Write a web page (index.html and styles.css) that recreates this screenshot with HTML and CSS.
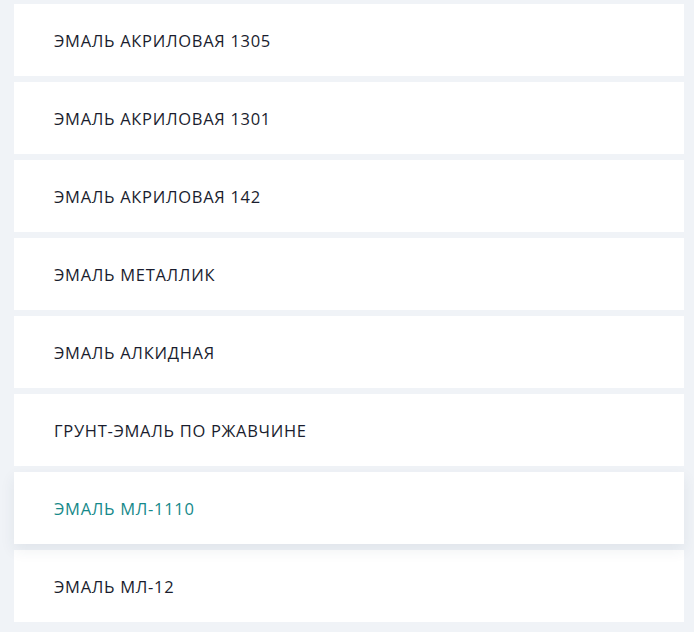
FILE: index.html
```html
<!DOCTYPE html>
<html lang="ru">
<head>
<meta charset="utf-8">
<link rel="stylesheet" href="styles.css">
</head>
<body>
<ul class="menu">
  <li class="item"><a href="#">ЭМАЛЬ АКРИЛОВАЯ 1305</a></li>
  <li class="item"><a href="#">ЭМАЛЬ АКРИЛОВАЯ 1301</a></li>
  <li class="item"><a href="#">ЭМАЛЬ АКРИЛОВАЯ 142</a></li>
  <li class="item"><a href="#">ЭМАЛЬ МЕТАЛЛИК</a></li>
  <li class="item"><a href="#">ЭМАЛЬ АЛКИДНАЯ</a></li>
  <li class="item"><a href="#">ГРУНТ-ЭМАЛЬ ПО РЖАВЧИНЕ</a></li>
  <li class="item active"><a href="#">ЭМАЛЬ МЛ-1110</a></li>
  <li class="item"><a href="#">ЭМАЛЬ МЛ-12</a></li>
</ul>
</body>
</html>
```

FILE: styles.css
```css
html, body {
  margin: 0;
  padding: 0;
  background: #f0f3f7;
}
body {
  font-family: "Open Sans", "Liberation Sans", sans-serif;
}
.menu {
  list-style: none;
  margin: 0;
  padding: 4px 10px 0 14px;
  display: flex;
  flex-direction: column;
  gap: 6px;
}
.item {
  background: #ffffff;
  height: 72px;
  display: flex;
  align-items: center;
  padding-left: 40px;
}
.item a {
  text-decoration: none;
  color: #1a1d2e;
  font-size: 16.5px;
  letter-spacing: 0.7px;
}
.item.active {
  box-shadow: 0 6px 14px rgba(40, 60, 90, 0.08);
  position: relative;
  z-index: 1;
}
.item.active a {
  color: #16898a;
}
```
